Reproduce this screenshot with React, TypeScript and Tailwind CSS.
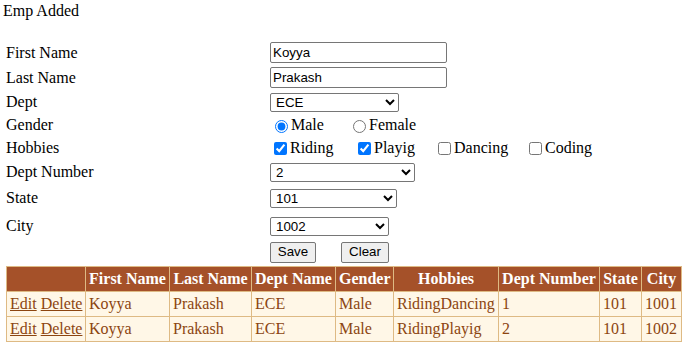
import React from "react";

const sans = "font-['Liberation_Sans',Arial,sans-serif] text-[13.333px]";
const textInput = `h-[21px] border border-[#767676] rounded-[2px] px-[2px] py-[1px] bg-white text-black ${sans}`;
const selectCls = `h-[19px] border border-[#767676] rounded-[2px] pl-[1px] bg-white text-black ${sans}`;
const btnCls = `h-[21px] border border-[#767676] rounded-[2px] bg-[#efefef] text-black ${sans}`;

function Label({ children, h }: { children: React.ReactNode; h: string }) {
  return <div className={`${h} flex items-center pl-[6px]`}>{children}</div>;
}

function Cell({ children, h }: { children: React.ReactNode; h: string }) {
  return <div className={`${h} flex items-center`}>{children}</div>;
}

const th = "border border-[#DEBA84] px-[3px] py-[3px] leading-[18px] text-center whitespace-nowrap font-bold";
const td = "border border-[#DEBA84] px-[3px] py-[3px] leading-[18px] text-left whitespace-nowrap";

const rows = [
  { fn: "Koyya", ln: "Prakash", dept: "ECE", gender: "Male", hobbies: "RidingDancing", dn: "1", state: "101", city: "1001" },
  { fn: "Koyya", ln: "Prakash", dept: "ECE", gender: "Male", hobbies: "RidingPlayig", dn: "2", state: "101", city: "1002" },
];

export default function App() {
  return (
    <div className="w-[694px] h-[357px] bg-white text-black font-['Liberation_Serif','Times_New_Roman',serif] text-[16px] leading-[18px]">
      <div className="pt-[2px] pl-[3px] h-[20px]">Emp Added</div>
      <div className="grid grid-cols-[270px_1fr] mt-[20px]">
        <Label h="h-[25px]">First Name</Label>
        <Cell h="h-[25px]">
          <input className={`${textInput} w-[177px]`} defaultValue="Koyya" />
        </Cell>
        <Label h="h-[25px]">Last Name</Label>
        <Cell h="h-[25px]">
          <input className={`${textInput} w-[177px]`} defaultValue="Prakash" />
        </Cell>
        <Label h="h-[24px]">Dept</Label>
        <Cell h="h-[24px]">
          <select className={`${selectCls} w-[129px]`} defaultValue="ECE">
            <option>ECE</option>
            <option>CSE</option>
            <option>EEE</option>
          </select>
        </Cell>
        <Label h="h-[22px]">Gender</Label>
        <Cell h="h-[22px]">
          <label className="w-[78px] flex items-center">
            <input type="radio" name="g" defaultChecked className="ml-[5px] mr-[3px] mt-[2px] w-[13px] h-[13px]" />
            <span>Male</span>
          </label>
          <label className="flex items-center">
            <input type="radio" name="g" className="ml-[5px] mr-[3px] mt-[2px] w-[13px] h-[13px]" />
            <span>Female</span>
          </label>
        </Cell>
        <Label h="h-[24px]">Hobbies</Label>
        <Cell h="h-[24px]">
          <label className="w-[84px] flex items-center">
            <input type="checkbox" defaultChecked className="ml-[4px] mr-[3px] w-[13px] h-[13px]" />
            <span>Riding</span>
          </label>
          <label className="w-[80px] flex items-center">
            <input type="checkbox" defaultChecked className="ml-[4px] mr-[3px] w-[13px] h-[13px]" />
            <span>Playig</span>
          </label>
          <label className="w-[91px] flex items-center">
            <input type="checkbox" className="ml-[4px] mr-[3px] w-[13px] h-[13px]" />
            <span>Dancing</span>
          </label>
          <label className="flex items-center">
            <input type="checkbox" className="ml-[4px] mr-[3px] w-[13px] h-[13px]" />
            <span>Coding</span>
          </label>
        </Cell>
        <Label h="h-[24px]">Dept Number</Label>
        <Cell h="h-[24px]">
          <select className={`${selectCls} w-[145px]`} defaultValue="2">
            <option>1</option>
            <option>2</option>
          </select>
        </Cell>
        <Label h="h-[28px]">State</Label>
        <Cell h="h-[28px]">
          <select className={`${selectCls} w-[127px]`} defaultValue="101">
            <option>101</option>
          </select>
        </Cell>
        <Label h="h-[28px]">City</Label>
        <Cell h="h-[28px]">
          <select className={`${selectCls} w-[119px]`} defaultValue="1002">
            <option>1001</option>
            <option>1002</option>
          </select>
        </Cell>
        <div className="h-[24px]" />
        <Cell h="h-[24px]">
          <button className={`${btnCls} w-[46px]`}>Save</button>
          <button className={`${btnCls} w-[48px] ml-[25px]`}>Clear</button>
        </Cell>
      </div>
      <table className="mt-[2px] ml-[6px] w-[675px] table-fixed border-collapse border border-[#DEBA84]">
        <colgroup>
          <col className="w-[79px]" />
          <col className="w-[84px]" />
          <col className="w-[82px]" />
          <col className="w-[84px]" />
          <col className="w-[58px]" />
          <col className="w-[105px]" />
          <col className="w-[101px]" />
          <col className="w-[42px]" />
          <col className="w-[40px]" />
        </colgroup>
        <thead>
          <tr className="bg-[#A55129] text-white">
            <th className={th}>&nbsp;</th>
            <th className={th}>First Name</th>
            <th className={th}>Last Name</th>
            <th className={th}>Dept Name</th>
            <th className={th}>Gender</th>
            <th className={th}>Hobbies</th>
            <th className={th}>Dept Number</th>
            <th className={th}>State</th>
            <th className={th}>City</th>
          </tr>
        </thead>
        <tbody>
          {rows.map((r, i) => (
            <tr key={i} className="bg-[#FFF7E7] text-[#8C4510]">
              <td className={td}>
                <a className="underline cursor-pointer">Edit</a> <a className="underline cursor-pointer">Delete</a>
              </td>
              <td className={td}>{r.fn}</td>
              <td className={td}>{r.ln}</td>
              <td className={td}>{r.dept}</td>
              <td className={td}>{r.gender}</td>
              <td className={td}>{r.hobbies}</td>
              <td className={td}>{r.dn}</td>
              <td className={td}>{r.state}</td>
              <td className={td}>{r.city}</td>
            </tr>
          ))}
        </tbody>
      </table>
    </div>
  );
}
